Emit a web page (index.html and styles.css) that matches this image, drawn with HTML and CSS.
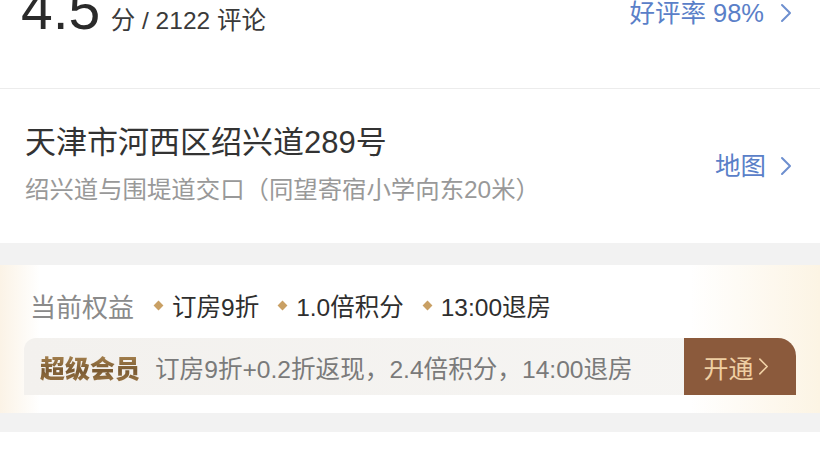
FILE: index.html
```html
<!DOCTYPE html>
<html lang="zh-CN">
  <head>
    <meta charset="UTF-8" />
    <meta name="viewport" content="width=device-width, initial-scale=1.0" />
    <title>酒店详情</title>
    <link rel="stylesheet" href="styles.css">
  </head>
  <body>
    <div class="summary">
      <div class="score-row">
        <div class="score">
          <span class="score-num">4.5</span>
          <span class="score-meta">分 / 2122 评论</span>
        </div>
        <a class="link rate" href="#">
          好评率 98%
          <svg class="chev" viewBox="0 0 12 20" width="12" height="20"><path d="M2 2 L10 10 L2 18" fill="none" stroke="currentColor" stroke-width="2" stroke-linecap="round" stroke-linejoin="round"/></svg>
        </a>
      </div>
    </div>

    <div class="address">
      <div class="address-text">
        <h2>天津市河西区绍兴道289号</h2>
        <p>绍兴道与围堤道交口（同望寄宿小学向东20米）</p>
      </div>
      <a class="link" href="#">
        地图
        <svg class="chev" viewBox="0 0 12 20" width="12" height="20"><path d="M2 2 L10 10 L2 18" fill="none" stroke="currentColor" stroke-width="2" stroke-linecap="round" stroke-linejoin="round"/></svg>
      </a>
    </div>

    <div class="spacer"></div>

    <div class="benefits">
      <div class="current">
        <span class="label">当前权益</span>
        <span class="perk"><i class="dot"></i>订房9折</span>
        <span class="perk"><i class="dot"></i>1.0倍积分</span>
        <span class="perk"><i class="dot"></i>13:00退房</span>
      </div>
      <div class="vip">
        <span class="vip-tag">超级会员</span>
        <span class="vip-desc">订房9折+0.2折返现，2.4倍积分，14:00退房</span>
        <a class="vip-btn" href="#">
          开通
          <svg viewBox="0 0 12 20" width="11" height="19"><path d="M2 2 L10 10 L2 18" fill="none" stroke="currentColor" stroke-width="1.8" stroke-linecap="round" stroke-linejoin="round"/></svg>
        </a>
      </div>
    </div>

    <div class="spacer small"></div>
  </body>
</html>
```

FILE: styles.css
```css
:root {
  --text: #333;
  --muted: #999;
  --blue: #5a80c8;
  --gray-bg: #f2f2f2;
  --brown: #8b5a3c;
}

* {
  box-sizing: border-box;
  margin: 0;
  padding: 0;
}

body {
  width: 820px;
  background: #fff;
  font-family: "Liberation Sans", "Noto Sans CJK SC", sans-serif;
  color: var(--text);
  overflow: hidden;
}

a {
  text-decoration: none;
}

.summary {
  height: 89px;
  border-bottom: 1px solid #ececec;
  overflow: hidden;
}

.score-row {
  display: flex;
  justify-content: space-between;
  align-items: flex-start;
  margin-top: -19px;
  padding: 0 28px 0 21px;
}

.score-num {
  font-size: 57px;
  line-height: 56px;
  color: #2a2a2a;
}

.score-meta {
  margin-left: 6px;
  font-size: 24.5px;
  color: #3a3a3a;
}

.link {
  display: flex;
  align-items: center;
  gap: 14px;
  font-size: 25.5px;
  line-height: 30px;
  color: var(--blue);
}

.link.rate {
  margin-top: 17px;
  gap: 16px;
}

.chev {
  color: #6d8fcf;
}

.address {
  height: 154px;
  display: flex;
  align-items: center;
  justify-content: space-between;
  padding: 0 28px 0 25px;
}

.address-text {
  display: flex;
  flex-direction: column;
  gap: 14px;
  margin-top: -2px;
}

.address h2 {
  font-size: 31px;
  font-weight: normal;
  line-height: 36px;
  color: #333;
}

.address p {
  font-size: 24.4px;
  line-height: 30px;
  color: var(--muted);
}

.spacer {
  height: 22px;
  background: var(--gray-bg);
}

.spacer.small {
  height: 19px;
}

.benefits {
  padding: 23px 24px 18px;
  background: linear-gradient(90deg, #fbf3e6 0, #fff 40px, #fff 690px, #fcf4e4 100%);
}

.current {
  display: flex;
  align-items: center;
  padding-left: 6px;
  height: 34px;
}

.label {
  font-size: 26px;
  color: #8a8a8a;
  margin-right: 21px;
}

.perk {
  display: flex;
  align-items: center;
  font-size: 24.5px;
  color: #2e2e2e;
  margin-right: 20px;
}

.dot {
  width: 7px;
  height: 7px;
  background: #c9a064;
  transform: rotate(45deg);
  margin-right: 10px;
}

.vip {
  display: flex;
  align-items: center;
  height: 57px;
  margin-top: 16px;
  padding-left: 16px;
  border-radius: 12px 18px 0 0;
  overflow: hidden;
  background: linear-gradient(90deg, #f3f1ee, #f6f5f3);
}

.vip-tag {
  font-size: 25px;
  font-weight: 900;
  background: linear-gradient(180deg, #b8925a 0%, #7a5a32 60%, #a07a48 100%);
  -webkit-background-clip: text;
  background-clip: text;
  color: transparent;
}

.vip-desc {
  margin-left: 15px;
  font-size: 24.6px;
  color: #7a7a7a;
}

.vip-btn {
  margin-left: auto;
  width: 112px;
  height: 100%;
  display: flex;
  align-items: center;
  justify-content: center;
  gap: 4px;
  padding-right: 8px;
  background: var(--brown);
  color: #efcfa3;
  font-size: 25px;
}
```
